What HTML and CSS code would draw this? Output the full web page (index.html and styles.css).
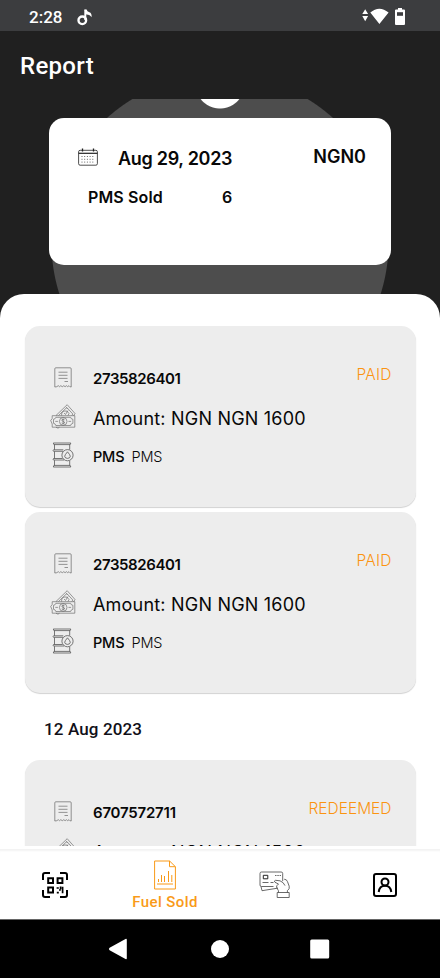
FILE: index.html
```html
<!DOCTYPE html>
<html lang="en">
<head>
<meta charset="utf-8">
<title>Report</title>
<link rel="stylesheet" href="styles.css">
</head>
<body>
<svg class="defs" width="0" height="0" aria-hidden="true">
  <symbol id="receipt" viewBox="0 0 18 21">
    <path d="M.8 1.800q0-1 1-1h14.400q1 0 1 1V20q-1.500 0-2.200-1.300q-1.300 2-2.600 0q-1.300 2-2.600 0q-1.500 2-3 0q-1.300 2-2.500 0Q3 20 .8 20Z" fill="none" stroke="#777" stroke-width=".8"/>
    <path d="M4.500 5.200h9M4.500 8.300h9M4.500 11.400h9M10.500 14.500h3.500" stroke="#888" stroke-width=".9" fill="none"/>
  </symbol>
  <symbol id="cash" viewBox="0 0 26 26">
    <g fill="none" stroke="#666" stroke-width=".65">
      <path d="M6 12.500 17.200 1.700 25 10.500 23.500 13M8.500 12.500l8.300-8 6 6.500-1 1.500"/>
      <path d="M11.500 12.500q-.5-3.500 2.500-4.500 3.500-1 5 2.500l-1 2M14 10l1.500 1.500L18 7.500M16.500 4.500l1 1.500"/>
      <path d="M2.200 12.700h22.600V24.200H2.200V21L.7 17.500l1.500-2ZM6 24.200l2 1 1.500-1"/>
      <path d="M5.800 14.300h14.800q.3 1.800 2.300 2v4q-2 .3-2.300 2.200H5.800q-.3-2-2.300-2.200v-4q2-.2 2.300-2Z"/>
      <circle cx="13.200" cy="18.400" r="3.800"/>
      <path d="M14.600 16.900q-1.300-1-2.600-.2-.8 1.200 1.200 1.700 2 .5 1.200 1.700-1.300.9-2.700-.2M13.200 15.700v5.400M5.300 18.400h2.600M18.500 18.400h2.600"/>
    </g>
  </symbol>
  <symbol id="barrel" viewBox="0 0 22 26">
    <g fill="none" stroke="#555" stroke-width=".8">
      <path d="M1.300 1h17.500l-.6 1.600H1.900ZM1.300 25h17.500l-.6-1.600H1.900Z"/>
      <path d="M2.500 2.600v5.200M2.500 9.500v7M2.500 18.200v5.200M17.700 2.600v5M17.700 18.800v4.600"/>
      <path d="M11 9.300H1.500q-.8-.8 0-1.500h9.800M12 18H1.500q-.8-.8 0-1.500h9"/>
      <circle cx="15.500" cy="13.200" r="5.600"/>
      <path d="M15.500 9.800q2.800 3.300 2.800 4.500-.3 2.100-2.800 2.100t-2.800-2.100q0-1.200 2.800-4.500Z"/>
    </g>
  </symbol>
</svg>
<div class="phone">
  <div class="status">
    <span class="clock">2:28</span>
    <svg class="note" width="16" height="17" viewBox="0 0 16 17"><circle cx="5.300" cy="11.300" r="3.800" fill="none" stroke="#fff" stroke-width="2.400"/><path d="M8.300.8V11" stroke="#fff" stroke-width="2" fill="none"/><path d="M7.300.5h2.300q.4 2.300 2.800 2.800 2.500.8 2.200 5-1.300-2.500-5.300-2.800Z" fill="#fff"/></svg>
    <svg class="signals" width="45" height="18" viewBox="0 0 45 18" fill="#fff"><path d="M3.200 1.200 6.100 6H.3ZM.3 8h5.800L3.200 13.200ZM8.300 4.500q9-7.600 18.300 0L17.400 16ZM36 0h4v1.500h2q1 0 1 1V16q0 1-1 1h-8q-1 0-1-1V2.500q0-1 1-1h2Z"/><path d="M35 4.200h6v3.600h-6Z" fill="#3c3d3f"/></svg>
  </div>
  <header class="title">Report</header>
  <section class="hero">
    <div class="summary">
      <div class="summary-top">
        <svg class="calendar" width="20" height="18" viewBox="0 0 20 18" fill="none" stroke="#222"><rect x=".6" y="2.300" width="18.800" height="14.900" rx="1.500" stroke-width=".8"/><path d="M.6 5.300h18.800" stroke-width="1.200"/><path d="M4.500.5v3M15.500.5v3" stroke-width="1.300"/><path d="M3.500 8.500h13M3.500 11.300h13M3.500 14.100h13" stroke-width="1" stroke-dasharray="1 1.700" stroke="#666"/></svg>
        <span class="date">Aug 29, 2023</span>
        <span class="total">NGN0</span>
      </div>
      <div class="summary-line"><span class="sold">PMS Sold</span><span class="count">6</span></div>
    </div>
  </section>
  <main class="sheet">
    <article class="card">
      <div class="row"><svg class="i-receipt"><use href="#receipt"/></svg><b class="ref">2735826401</b><span class="state">PAID</span></div>
      <div class="row"><svg class="i-cash"><use href="#cash"/></svg><span class="amount">Amount: NGN NGN 1600</span></div>
      <div class="row"><svg class="i-barrel"><use href="#barrel"/></svg><span class="product">PMS</span><span class="kind">PMS</span></div>
    </article>
    <article class="card">
      <div class="row"><svg class="i-receipt"><use href="#receipt"/></svg><b class="ref">2735826401</b><span class="state">PAID</span></div>
      <div class="row"><svg class="i-cash"><use href="#cash"/></svg><span class="amount">Amount: NGN NGN 1600</span></div>
      <div class="row"><svg class="i-barrel"><use href="#barrel"/></svg><span class="product">PMS</span><span class="kind">PMS</span></div>
    </article>
    <h2 class="day">12 Aug 2023</h2>
    <article class="card">
      <div class="row"><svg class="i-receipt"><use href="#receipt"/></svg><b class="ref ref-b">6707572711</b><span class="state redeemed">REDEEMED</span></div>
      <div class="row"><svg class="i-cash"><use href="#cash"/></svg><span class="amount">Amount: NGN NGN 1500</span></div>
    </article>
  </main>
  <nav class="tabs">
    <div class="tab"><svg width="28" height="28" viewBox="0 0 28 28" fill="none" stroke="#000" stroke-width="2"><path d="M2 9V4q0-2 2-2h5M19 2h5q2 0 2 2v5M26 19v5q0 2-2 2h-5M9 26H4q-2 0-2-2v-5"/><path d="M7.200 7.200h4.800v4.800H7.200ZM16.600 7.200h4.800v4.800h-4.800ZM7.200 16.600h4.800v4.800H7.200Z"/><path d="M15.600 17h2.200M18 19h1.800M21.600 15.800v6.400M15.800 21.600h2M19.600 15.600v2.600" stroke-width="1.700"/></svg></div>
    <div class="tab active"><svg width="24" height="30" viewBox="0 0 24 30" fill="none" stroke="#f99a18" stroke-width="1"><path d="M1.600 1h15L22.400 6.700V29H1.600ZM16.500 1v5.700h5.900"/><path d="M4 24h16M5.500 22v-3M8.500 22v-7M11.500 22v-6M15.500 22V11M18.800 22v-7"/></svg><span>Fuel Sold</span></div>
    <div class="tab"><svg class="pay" width="32" height="28" viewBox="0 0 32 28" fill="none" stroke="#444" stroke-width=".8"><path d="M14.500 15.500H2.500q-1.500 0-1.500-1.500V2.500Q1 1 2.500 1h19.700q1.500 0 1.500 1.500V10M2 15.500l1 4.200 16-2.600"/><path d="M4.300 4.300h4.500v3.500H4.300Z" stroke="#222" stroke-width="1"/><path d="M16 4.500h6" stroke-dasharray="1.500 .8"/><path d="M3.500 11.500h6M11.500 11.500h3"/><path d="M19.500 21.500q.3-2-1-3.500l-1-2q0-1.500 2-3l-3.500-1.700q-1.500-1.500.5-2l4.500.5 3 1.800 2 3M25.200 8.200q2.500 0 3.300 2.500l1.700 4.500q.8 3-1.800 4.300v2"/><path d="M18.200 21.500h12v5h-12Z"/></svg></div>
    <div class="tab"><svg width="26" height="26" viewBox="0 0 26 26" fill="none" stroke="#000" stroke-width="2"><rect x="2" y="2" width="22" height="22" rx="2"/><circle cx="13" cy="10" r="3.500"/><path d="M6.700 20q.8-6.200 6.300-6.200T19.300 20"/></svg></div>
  </nav>
  <footer class="system">
    <svg class="back" width="20" height="22" viewBox="0 0 20 22" fill="#fff"><path d="M1.600 9.800 17.500.9q1.300-.5 1.300.8v18.600q0 1.300-1.300.8L1.600 12.200q-1.500-1.200 0-2.400Z"/></svg>
    <svg width="20" height="20" viewBox="0 0 20 20" fill="#fff"><circle cx="10" cy="10" r="9"/></svg>
    <svg width="20" height="20" viewBox="0 0 20 20" fill="#fff"><rect x=".2" y=".4" width="19" height="19" rx="1.500"/></svg>
  </footer>
</div>
</body>
</html>
```
FILE: styles.css
```css
* { box-sizing: border-box; }
body { margin: 0; background: #202020; }
.defs { display: none; }
.phone { width: 440px; height: 978px; display: flex; flex-direction: column; overflow: hidden; font-family: Inter, sans-serif; color: #080808; }
svg { flex: none; display: block; }
span, b { white-space: nowrap; }

.status { height: 31px; flex: none; background: #3c3d3f; display: flex; align-items: flex-start; padding: 8px 33px 0 29px; color: #fff; }
.clock { width: 48px; font: 500 17px/19px Roboto, sans-serif; letter-spacing: 0; }
.note { margin-top: 1px; }
.signals { margin-left: auto; }

.title { height: 68px; flex: none; padding: 19px 20px 0; font: 500 24px/32px Roboto, sans-serif; letter-spacing: .3px; color: #fff; }

.hero { height: 196px; flex: none; padding: 19.400px 49px 0; background: radial-gradient(circle at 220px -15px, #fff 24px, transparent 25px), radial-gradient(circle at 220px 144px, #4d4d4d 168px, #202020 169px); }
.summary { height: 147px; padding: 26px 25px 0 29px; border-radius: 15px; background: #fff; }
.summary-top { display: flex; height: 28px; align-items: center; }
.date { margin-left: 20px; font-size: 18px; font-weight: 600; letter-spacing: -.3px; }
.total { margin-left: auto; font-size: 18px; font-weight: 600; position: relative; top: -2px; }
.calendar { position: relative; top: -1px; }
.summary-line { display: flex; margin: 12.500px 0 0 10px; font-size: 16px; line-height: 24px; font-weight: 600; letter-spacing: .12px; }
.sold { width: 134px; }

.sheet { flex: none; height: 552px; margin-top: -1px; overflow: hidden; padding: 32px 24.500px 0; background: #fff; border-radius: 24px 24px 0 0; }
.card { height: 181px; margin-bottom: 5px; padding: 31px 24px 0 26px; background: #ededed; border-radius: 15px; box-shadow: 0 1px 1px #d2d2d2; }
.row { display: flex; height: 39px; align-items: center; }
.row svg { position: relative; top: .5px; }
.row .i-receipt { width: 18px; height: 21px; margin: 0 20.500px 0 4px; left: -.5px; }
.row .i-cash { width: 26px; height: 26px; margin-right: 16.500px; left: -.5px; }
.row .i-barrel { width: 22px; height: 26px; margin: 0 18.500px 0 2px; left: -.5px; }
.ref { font-size: 15px; font-weight: 600; letter-spacing: -.4px; position: relative; top: 2px; }
.ref-b { letter-spacing: -.2px; }
.state { margin-left: auto; font-size: 15.500px; font-weight: 300; letter-spacing: .2px; color: #fb9410; position: relative; top: -2.500px; }
.redeemed { letter-spacing: 0; }
.amount { font-size: 18px; letter-spacing: .2px; position: relative; top: 2.500px; }
.product { width: 38.500px; font-size: 14.500px; font-weight: 500; letter-spacing: -.2px; position: relative; top: 1.500px; }
.kind { font-size: 14.500px; font-weight: 300; letter-spacing: -.2px; position: relative; top: 1.500px; }
.day { height: 62px; margin: 0 0 0 19.500px; padding-top: 19px; font: 500 17px/24px Roboto, sans-serif; letter-spacing: .12px; color: #111018; }

.tabs { height: 73px; flex: none; display: grid; grid-template-columns: repeat(4, 1fr); background: #fff; border-top: 3px solid #fff; box-shadow: inset 0 3px 2px -1px #f3f3f3; }
.tab { display: flex; flex-direction: column; align-items: center; justify-content: center; padding-top: 2px; }
.tab.active { justify-content: flex-start; padding-top: 11px; color: #f99a18; font: 500 15px/20px Roboto, sans-serif; letter-spacing: .4px; }
.active span { margin-top: 2px; }

.system { flex: 1; background: #000; border-top: 1px solid #666; display: flex; justify-content: center; align-items: center; gap: 80px; }
.back { position: relative; left: -2px; }
```
